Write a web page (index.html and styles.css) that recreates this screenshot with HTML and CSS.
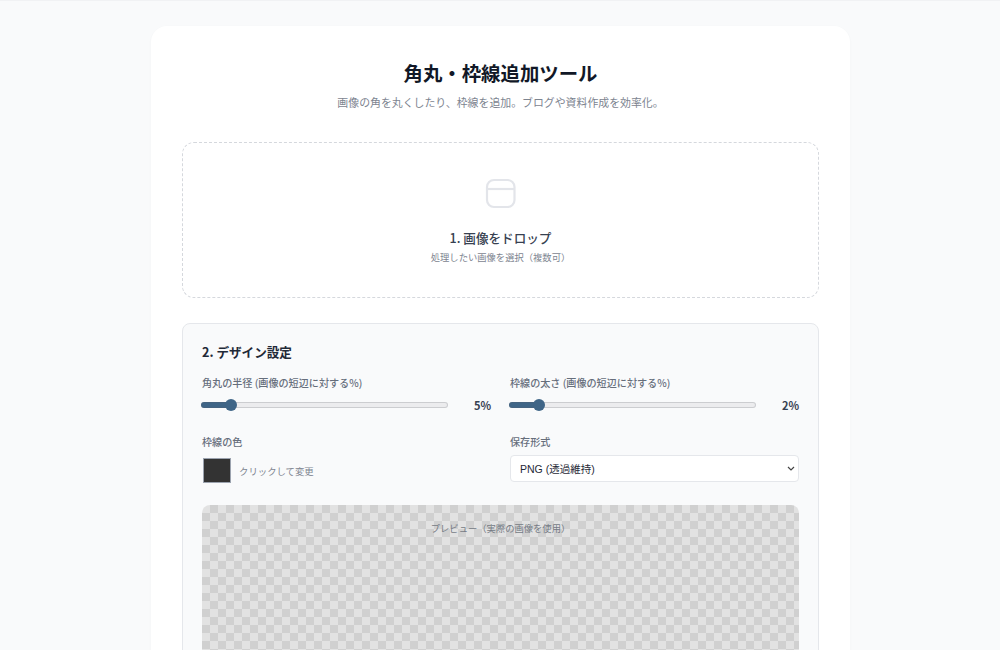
FILE: index.html
```html
<!DOCTYPE html>
<html lang="ja">
<head>
<meta charset="utf-8">
<title>角丸・枠線追加ツール</title>
<link rel="stylesheet" href="styles.css">
</head>
<body>
<main class="card">
  <header class="head">
    <h1 class="title">角丸・枠線追加ツール</h1>
    <p class="sub">画像の角を丸くしたり、枠線を追加。ブログや資料作成を効率化。</p>
  </header>
  <section class="drop">
    <svg class="drop-icon" width="32" height="32" viewBox="0 0 32 32" fill="none" stroke="#e3e5ea" stroke-width="2.2">
      <rect x="2" y="2" width="27.5" height="27" rx="7"/>
      <path d="M2 11H29.5"/>
    </svg>
    <p class="drop-title">1. 画像をドロップ</p>
    <p class="drop-sub">処理したい画像を選択（複数可）</p>
  </section>
  <section class="panel">
    <h2 class="panel-title">2. デザイン設定</h2>
    <div class="grid">
      <div class="field">
        <label class="label">角丸の半径 (画像の短辺に対する%)</label>
        <div class="range-row">
          <input class="range" type="range" min="0" max="50" value="5" style="--fill: 29px">
          <span class="val">5%</span>
        </div>
      </div>
      <div class="field">
        <label class="label">枠線の太さ (画像の短辺に対する%)</label>
        <div class="range-row">
          <input class="range" type="range" min="0" max="20" value="2" style="--fill: 29px">
          <span class="val">2%</span>
        </div>
      </div>
      <div class="field">
        <label class="label">枠線の色</label>
        <div class="color-row">
          <span class="swatch"></span>
          <span class="hint">クリックして変更</span>
        </div>
      </div>
      <div class="field">
        <label class="label">保存形式</label>
        <select class="select">
          <option>PNG (透過維持)</option>
        </select>
      </div>
    </div>
    <div class="preview">
      <span class="preview-text">プレビュー（実際の画像を使用）</span>
    </div>
  </section>
</main>
</body>
</html>
```
FILE: styles.css
```css
* { box-sizing: border-box; }
html, body { height: 650px; overflow: hidden; }
body {
  margin: 0;
  padding: 25px 0 0 1px;
  background: #f9fafb;
  border-top: 1px solid #f1f2f4;
  font-family: "Noto Sans CJK JP", "Noto Sans", sans-serif;
}
.card {
  width: 699px;
  margin: 0 auto;
  padding: 32px 31px;
  background: #fff;
  border-radius: 16px;
  box-shadow: 0 1px 3px rgba(0,0,0,0.03);
}
.head { text-align: center; margin-bottom: 31px; }
.title {
  margin: 0;
  font-size: 19.4px;
  line-height: 30px;
  font-weight: 700;
  color: #111827;
}
.sub {
  margin: 5px 0 0;
  font-size: 10.9px;
  line-height: 18px;
  color: #7d8490;
}
.drop {
  height: 156px;
  padding-top: 36px;
  border: 1px dashed #d5d8dd;
  border-radius: 12px;
  text-align: center;
}
.drop-icon { display: block; margin: -1px auto 0; }
.drop-title {
  margin: 18px 0 0;
  font-size: 12.6px;
  line-height: 20px;
  font-weight: 500;
  color: #374151;
}
.drop-sub {
  margin: 0;
  font-size: 9.3px;
  line-height: 18px;
  color: #7d8490;
}
.panel {
  margin-top: 25px;
  padding: 18px 19px;
  background: #f9fafb;
  border: 1px solid #e5e7eb;
  border-radius: 8px;
  height: 400px;
}
.panel-title {
  margin: 0 0 13px;
  font-size: 12.6px;
  line-height: 20px;
  font-weight: 700;
  color: #1f2937;
}
.grid {
  display: grid;
  grid-template-columns: 289px 289px;
  column-gap: 19px;
  row-gap: 15px;
}
.label {
  display: block;
  font-size: 10.1px;
  line-height: 16px;
  font-weight: 500;
  color: #666e7b;
}
.range-row {
  display: flex;
  align-items: center;
  gap: 16px;
  height: 28px;
}
.range {
  flex: 1;
  min-width: 0;
  margin: 0 0 0 -1px;
  height: 12px;
  appearance: none;
  background: none;
}
.range::-webkit-slider-runnable-track {
  height: 6px;
  border-radius: 3px;
  background: linear-gradient(90deg, #3f6587 var(--fill), #ececee 0);
  box-shadow: inset 0 0 0 1px rgba(90, 95, 105, 0.22);
}
.range::-webkit-slider-thumb {
  appearance: none;
  width: 12px;
  height: 12px;
  margin-top: -3px;
  border-radius: 50%;
  background: #3f6587;
}
.val {
  width: 27px;
  text-align: right;
  font-size: 11px;
  font-weight: 700;
  color: #374151;
}
.color-row {
  display: flex;
  align-items: center;
  gap: 8px;
  margin-top: 8px;
  padding-left: 1px;
}
.swatch {
  width: 28px;
  height: 25px;
  background: #333;
  border: 1px solid #9ca3af;
}
.hint {
  font-size: 9.4px;
  line-height: 16px;
  color: #7d8490;
}
.select {
  display: block;
  width: 100%;
  height: 27px;
  margin-top: 5px;
  padding: 0 9px;
  appearance: none;
  background: #fff url("data:image/svg+xml,%3Csvg xmlns='http://www.w3.org/2000/svg' width='8' height='5' viewBox='0 0 8 5'%3E%3Cpath d='M1 1l3 3 3-3' fill='none' stroke='%23444' stroke-width='1.2'/%3E%3C/svg%3E") no-repeat right 3px center;
  border: 1px solid #e5e7eb;
  border-radius: 4px;
  font-family: "Liberation Sans", "Noto Sans CJK JP", sans-serif;
  font-size: 10.5px;
  color: #1f2937;
}
.preview {
  margin-top: 22px;
  height: 300px;
  padding-top: 14px;
  border-radius: 8px;
  text-align: center;
  background: repeating-conic-gradient(#d0d0d0 0 25%, #e2e2e2 0 50%) 0 0 / 16px 16px;
}
.preview-text {
  display: block;
  font-size: 9.3px;
  line-height: 18px;
  color: #757b85;
}
```
